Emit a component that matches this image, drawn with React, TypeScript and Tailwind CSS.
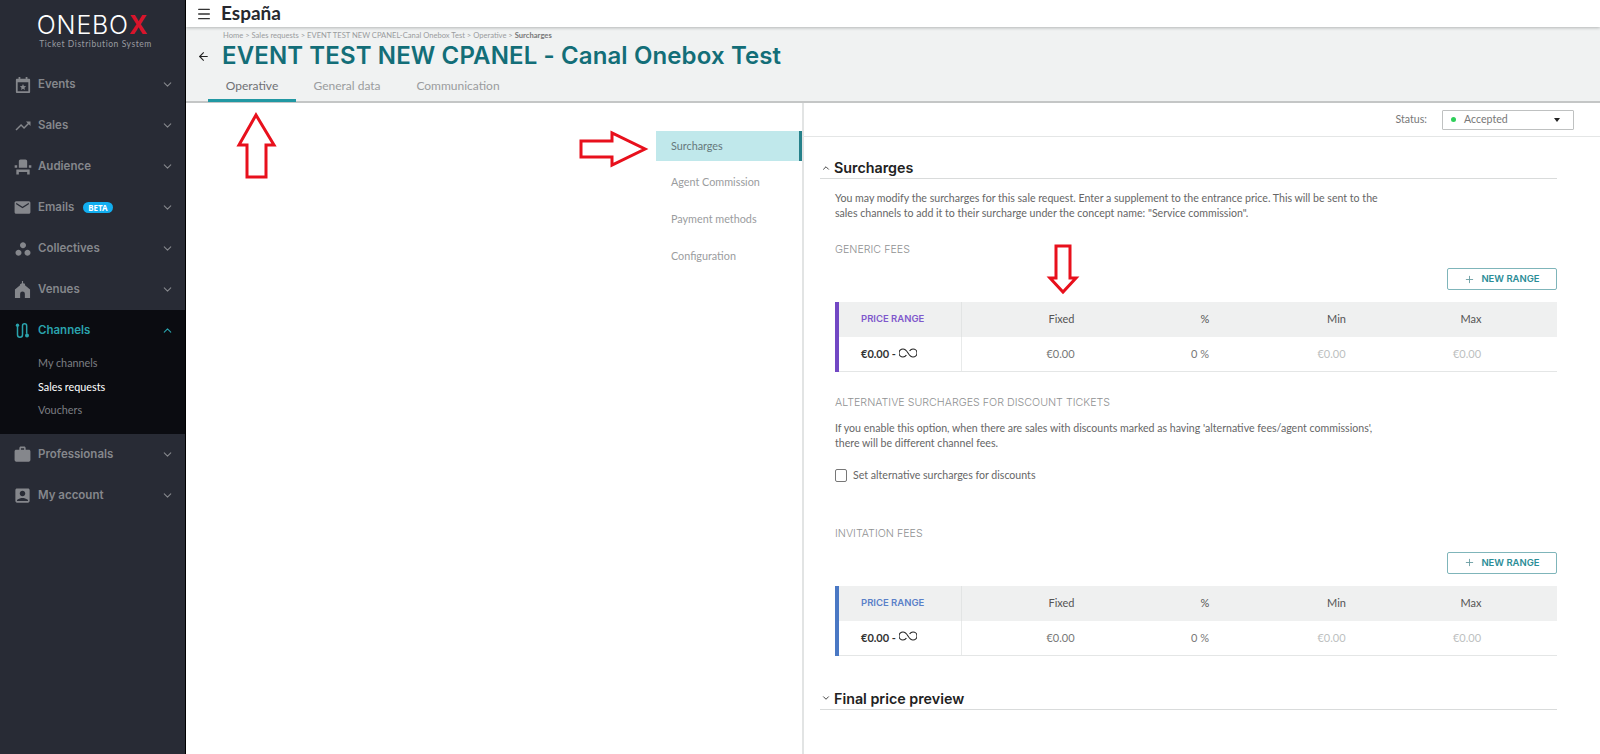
import type { ReactNode } from "react";
import { ArrowLeft, ChevronDown, ChevronUp, Menu, Plus } from "lucide-react";
import { MdAccountBox, MdEmail, MdEventSeat, MdTrendingUp, MdWork, MdWorkspaces } from "react-icons/md";

const body = "font-['Lato','Noto_Sans',sans-serif]";
const head = "font-['Inter','Noto_Sans',sans-serif]";

function EventIcon() {
  return (
    <svg width="16" height="16" viewBox="0 0 18 18" fill="currentColor">
      <path d="M4 0h2v2h6V0h2v2h2a1 1 0 0 1 1 1v14a1 1 0 0 1-1 1H2a1 1 0 0 1-1-1V3a1 1 0 0 1 1-1h2V0Zm-1 6v10h12V6H3Z" />
      <path d="m9 7.8 1 2.4 2.6.2-2 1.7.6 2.5L9 13.3l-2.2 1.3.6-2.5-2-1.7 2.6-.2L9 7.8Z" />
    </svg>
  );
}

function VenueIcon() {
  return (
    <svg width="17" height="17" viewBox="0 0 18 18" fill="currentColor">
      <path d="M8.4 0h1.2v2.4l2 .6v1.6L17 9v9h-5.5v-4.5a2.5 2.5 0 0 0-5 0V18H1V9l5.4-4.4V3.4l2-1V0Z" />
    </svg>
  );
}

function ChannelIcon() {
  return (
    <svg width="15" height="15" viewBox="0 0 18 18" fill="none" stroke="currentColor" strokeWidth="1.8">
      <path d="M3 3v11a3 3 0 0 0 6 0V3.5a2.4 2.4 0 0 1 5 0V13" />
      <circle cx="3" cy="2.6" r="2" fill="currentColor" stroke="none" />
      <circle cx="14.4" cy="15" r="2.4" fill="currentColor" stroke="none" />
    </svg>
  );
}

function NavRow({ icon, label, beta }: { icon: ReactNode; label: string; beta?: boolean }) {
  return (
    <div className="flex h-[41px] items-center pl-[15px] pr-[11px] text-[#85878c]">
      <span className="mr-[8px] flex w-[15px] justify-center [&>svg]:shrink-0">{icon}</span>
      <span className={`${head} text-[11.5px] font-semibold`}>{label}</span>
      {beta && (
        <span className="ml-[9px] rounded-full bg-[#12aef0] px-[5px] text-[8px] leading-[11px] font-bold text-white">BETA</span>
      )}
      <ChevronDown size={13} className="ml-auto" />
    </div>
  );
}

function Sidebar() {
  return (
    <aside className="flex w-[186px] shrink-0 flex-col border-r border-black bg-[#282b35]">
      <div className="flex h-[64px] flex-col items-center pt-[11px] text-white">
        <div className={`${head} text-[25px] leading-[28px] font-light tracking-[0.8px]`}>
          ONEBO<span className="font-bold text-[#d9142b]">X</span>
        </div>
        <div className={`${body} pl-[6px] text-[8.5px] leading-[10px] tracking-[0.55px] text-[#9a9ca1]`}>Ticket Distribution System</div>
      </div>
      <NavRow icon={<EventIcon />} label="Events" />
      <NavRow icon={<MdTrendingUp size={18} />} label="Sales" />
      <NavRow icon={<MdEventSeat size={20} />} label="Audience" />
      <NavRow icon={<MdEmail size={19} />} label="Emails" beta />
      <NavRow icon={<MdWorkspaces size={18} />} label="Collectives" />
      <NavRow icon={<VenueIcon />} label="Venues" />
      <div className="h-[124px] bg-[#0b0c11]">
        <div className="flex h-[41px] items-center pl-[15px] pr-[11px] text-[#2aa3ad]">
          <span className="mr-[8px] flex w-[15px] justify-center">
            <ChannelIcon />
          </span>
          <span className={`${head} text-[11.5px] font-semibold`}>Channels</span>
          <ChevronUp size={13} className="ml-auto" />
        </div>
        <div className={`${body} flex flex-col pl-[38px] text-[10.8px] leading-[23.5px] text-[#7c7e83]`}>
          <span>My channels</span>
          <span className="text-white">Sales requests</span>
          <span>Vouchers</span>
        </div>
      </div>
      <NavRow icon={<MdWork size={19} />} label="Professionals" />
      <NavRow icon={<MdAccountBox size={19} />} label="My account" />
    </aside>
  );
}

function PageHeader() {
  return (
    <>
      <div className="z-10 flex h-[27px] items-center bg-white pl-[10px] shadow-[0_1px_3px_rgba(0,0,0,0.25)]">
        <Menu size={16} className="text-[#333]" />
        <span className={`${body} ml-[9px] text-[19px] font-bold text-[#26282e]`}>España</span>
      </div>
      <div className="h-[76px] border-b-2 border-[#c4c6c6] bg-[#f0f2f2]">
        <div className={`${body} pt-[3px] pl-[37px] text-[7.6px] leading-[10px] text-[#9a9c9e]`}>
          Home &gt; Sales requests &gt; EVENT TEST NEW CPANEL-Canal Onebox Test &gt; Operative &gt; <span className="font-bold text-[#777]">Surcharges</span>
        </div>
        <div className="mt-[2px] flex h-[28px] items-center pl-[11px]">
          <ArrowLeft size={13} className="text-[#222]" />
          <span className={`${head} ml-[12px] text-[24px] font-semibold tracking-[0.12px] text-[#136e78]`}>EVENT TEST NEW CPANEL - Canal Onebox Test</span>
        </div>
        <div className={`${body} flex h-[32px] pl-[22px] text-[12px] text-[#9a9c9e]`}>
          <div className="flex h-[32px] w-[88px] items-center justify-center border-b-[3px] border-[#2198a3] pt-[2px] text-[#6f7174]">Operative</div>
          <div className="flex h-[32px] w-[102px] items-center justify-center">General data</div>
          <div className="flex h-[32px] w-[120px] items-center justify-center">Communication</div>
        </div>
      </div>
    </>
  );
}

function SectionTitle({ open, children }: { open: boolean; children: ReactNode }) {
  return (
    <div className="ml-4 flex h-[22px] w-[737px] items-center border-b border-[#d9dbdb] pl-[1px] text-[#222]">
      {open ? <ChevronUp size={10} /> : <ChevronDown size={10} />}
      <span className={`${head} ml-[3px] text-[14.3px] font-semibold`}>{children}</span>
    </div>
  );
}

function NewRange() {
  return (
    <div className="flex justify-end pr-[43px]">
      <div className={`${head} flex h-[22px] w-[110px] items-center justify-center gap-[6px] rounded-[2px] border border-[#7fb5ba] text-[9.5px] font-semibold text-[#2b8d97]`}>
        <Plus size={11} className="text-[#6b9ea3]" />
        NEW RANGE
      </div>
    </div>
  );
}

function Infinity8() {
  return (
    <svg width="18" height="10" viewBox="0 0 18 10" fill="none" stroke="#222" strokeWidth="1.1" className="mb-[3px] ml-[3px]">
      <path d="M9 5C7.5 2.5 6 1 4 1a4 4 0 0 0 0 8c1.6 0 2.6-.8 3.4-2M9 5c1.5 2.5 3 4 5 4a4 4 0 0 0 0-8c-1.6 0-2.6.8-3.4 2" />
    </svg>
  );
}

function FeeTable({ bar, labelColor }: { bar: string; labelColor: string }) {
  return (
    <div className={`ml-[31px] w-[722px] border-l-4 ${bar} ${body} text-[11px] text-[#555]`}>
      <div className="grid h-[35px] grid-cols-[123px_199px_88px_175px_94px_1fr] items-center bg-[#eff0f0] text-center">
        <span className={`${head} flex h-full items-center border-r border-[#e2e4e4] pl-[22px] text-[9.5px] font-semibold ${labelColor}`}>PRICE RANGE</span>
        <span>Fixed</span>
        <span>%</span>
        <span>Min</span>
        <span>Max</span>
      </div>
      <div className="grid h-[35px] grid-cols-[123px_199px_88px_175px_94px_1fr] items-center border-b border-[#e4e6e6] text-center">
        <span className="flex h-full items-center border-r border-[#e8eaea] pl-[22px] font-bold text-[#333]">
          €0.00 -<Infinity8 />
        </span>
        <span className="pr-[2px] text-[#777]">€0.00</span>
        <span className="pr-[10px] text-[#777]">0 %</span>
        <span className="pr-[10px] text-[#bdbfbf]">€0.00</span>
        <span className="pr-[8px] text-[#bdbfbf]">€0.00</span>
      </div>
    </div>
  );
}

function FeeHeading({ children }: { children: ReactNode }) {
  return <div className={`${head} pl-[31px] text-[10.7px] leading-[12px] font-light text-[#8f9192]`}>{children}</div>;
}

function DetailPanel() {
  return (
    <div className={`${body} relative flex-1`}>
      <div className="flex h-[34px] items-center justify-end border-b border-[#e4e6e6] pr-[26px] text-[10.6px] text-[#777]">
        <span>Status:</span>
        <div className="ml-[15px] flex h-[20px] w-[132px] items-center rounded-[1px] border border-[#bfc1c1] pl-[8px] pr-[13px]">
          <span className="h-[5px] w-[5px] rounded-full bg-[#2fcf5a]" />
          <span className="ml-[8px]">Accepted</span>
          <span className="ml-auto h-0 w-0 border-x-[3px] border-t-[4px] border-x-transparent border-t-[#222]" />
        </div>
      </div>
      <div className="mt-[20px]">
        <SectionTitle open>Surcharges</SectionTitle>
      </div>
      <p className="mt-[12px] w-[600px] pl-[31px] text-[10.6px] leading-[15px] text-[#666]">
        You may modify the surcharges for this sale request. Enter a supplement to the entrance price. This will be sent to the
        <br />
        sales channels to add it to their surcharge under the concept name: "Service commission".
      </p>
      <div className="mt-[23px]">
        <FeeHeading>GENERIC FEES</FeeHeading>
      </div>
      <div className="mt-[12px]">
        <NewRange />
      </div>
      <div className="mt-[12px]">
        <FeeTable bar="border-[#7248c4]" labelColor="text-[#7f58cc]" />
      </div>
      <div className="mt-[25px]">
        <FeeHeading>ALTERNATIVE SURCHARGES FOR DISCOUNT TICKETS</FeeHeading>
      </div>
      <p className="mt-[12px] pl-[31px] text-[10.6px] leading-[15px] text-[#666]">
        If you enable this option, when there are sales with discounts marked as having 'alternative fees/agent commissions',
        <br />
        there will be different channel fees.
      </p>
      <div className="mt-[17px] flex items-center pl-[31px] text-[10.6px] text-[#666]">
        <span className="h-[13px] w-[12px] rounded-[2px] border border-[#777]" />
        <span className="ml-[6px]">Set alternative surcharges for discounts</span>
      </div>
      <div className="mt-[44px]">
        <FeeHeading>INVITATION FEES</FeeHeading>
      </div>
      <div className="mt-[12px]">
        <NewRange />
      </div>
      <div className="mt-[12px]">
        <FeeTable bar="border-[#4a78c4]" labelColor="text-[#5a80c8]" />
      </div>
      <div className="mt-[32px]">
        <SectionTitle open={false}>Final price preview</SectionTitle>
      </div>
    </div>
  );
}

function SideMenu() {
  return (
    <div className="flex w-[618px] shrink-0 justify-end border-r-2 border-[#e2e4e4] pt-[28px]">
      <div className={`${body} w-[146px] text-[10.8px] text-[#9a9c9e]`}>
        <div className="flex h-[30px] items-center border-r-[3px] border-[#26818a] bg-[#c0e8eb] pl-[15px] text-[#66787b]">Surcharges</div>
        <div className="flex h-[37px] items-center pl-[15px] pt-[6px]">Agent Commission</div>
        <div className="flex h-[37px] items-center pl-[15px] pt-[6px]">Payment methods</div>
        <div className="flex h-[37px] items-center pl-[15px] pt-[6px]">Configuration</div>
      </div>
    </div>
  );
}

function RedArrow({ points }: { points: string }) {
  return (
    <svg className="pointer-events-none absolute top-0 left-0" width="1600" height="754" fill="none" stroke="#e8101c" strokeWidth="3">
      <polygon points={points} />
    </svg>
  );
}

export default function App() {
  return (
    <div className="relative flex h-screen overflow-hidden bg-white">
      <Sidebar />
      <main className="flex min-w-0 flex-1 flex-col">
        <PageHeader />
        <div className="flex flex-1">
          <SideMenu />
          <DetailPanel />
        </div>
      </main>
      <RedArrow points="256,115 274,145 266,145 266,177 247,177 247,145 239,145" />
      <RedArrow points="581,141 612,141 612,133 645,149 612,165 612,157 581,157" />
      <RedArrow points="1056,246 1070,246 1070,278 1076,278 1063,292 1050,278 1056,278" />
    </div>
  );
}
